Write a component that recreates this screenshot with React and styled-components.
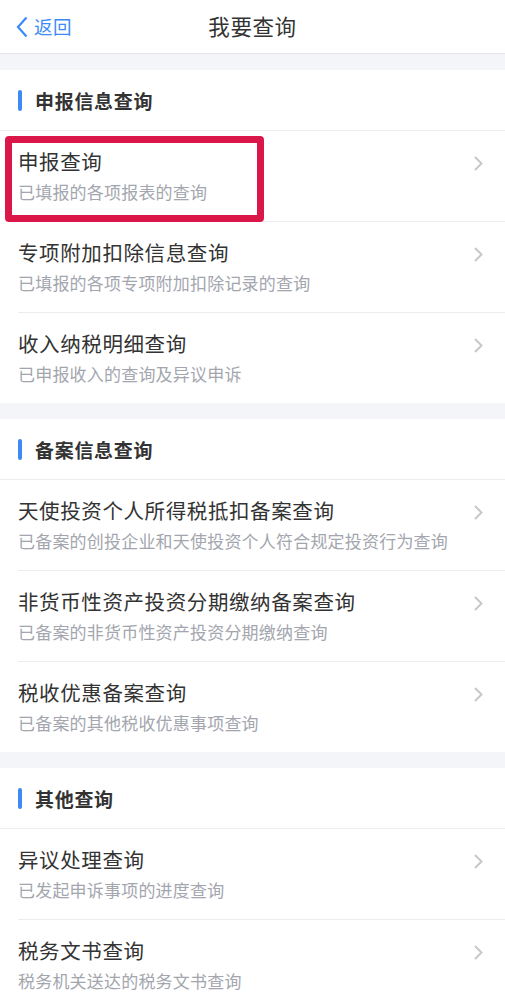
import React from "react";
import styled, { createGlobalStyle } from "styled-components";

const GlobalStyle = createGlobalStyle`
  body {
    margin: 0;
    background: #f4f5f8;
    font-family: "Noto Sans CJK SC", "Noto Sans", sans-serif;
  }
`;

const sections = [
  {
    title: "申报信息查询",
    items: [
      { name: "申报查询", desc: "已填报的各项报表的查询", marked: true },
      { name: "专项附加扣除信息查询", desc: "已填报的各项专项附加扣除记录的查询" },
      { name: "收入纳税明细查询", desc: "已申报收入的查询及异议申诉" },
    ],
  },
  {
    title: "备案信息查询",
    items: [
      {
        name: "天使投资个人所得税抵扣备案查询",
        desc: "已备案的创投企业和天使投资个人符合规定投资行为查询",
      },
      {
        name: "非货币性资产投资分期缴纳备案查询",
        desc: "已备案的非货币性资产投资分期缴纳查询",
      },
      { name: "税收优惠备案查询", desc: "已备案的其他税收优惠事项查询" },
    ],
  },
  {
    title: "其他查询",
    items: [
      { name: "异议处理查询", desc: "已发起申诉事项的进度查询" },
      { name: "税务文书查询", desc: "税务机关送达的税务文书查询" },
    ],
  },
];

function Chevron() {
  return (
    <svg width="11" height="17" viewBox="0 0 11 17">
      <polyline
        points="2,2 8.5,8.5 2,15"
        fill="none"
        stroke="#c7c7cc"
        strokeWidth="2"
      />
    </svg>
  );
}

function BackIcon() {
  return (
    <svg width="12" height="22" viewBox="0 0 12 22">
      <polyline
        points="10.5,1.5 2,11 10.5,20.5"
        fill="none"
        stroke="#3d8af7"
        strokeWidth="2.2"
      />
    </svg>
  );
}

export default function App() {
  return (
    <Page>
      <GlobalStyle />
      <NavBar>
        <Back>
          <BackIcon />
          <span>返回</span>
        </Back>
        <NavTitle>我要查询</NavTitle>
      </NavBar>
      {sections.map((section) => (
        <Section key={section.title}>
          <SectionHead>
            <Bar />
            {section.title}
          </SectionHead>
          {section.items.map((item) => (
            <Item key={item.name}>
              <ItemBody>
                <ItemText>
                  <ItemName>{item.name}</ItemName>
                  <ItemDesc>{item.desc}</ItemDesc>
                </ItemText>
                <Arrow>
                  <Chevron />
                </Arrow>
              </ItemBody>
              {item.marked && <Mark />}
            </Item>
          ))}
        </Section>
      ))}
    </Page>
  );
}

const Page = styled.div`
  width: 505px;
  min-height: 996px;
  background: #f4f5f8;
`;

const NavBar = styled.div`
  position: relative;
  height: 53px;
  background: #fff;
  border-bottom: 1px solid #e3e4e8;
  display: flex;
  align-items: center;
  justify-content: center;
`;

const Back = styled.div`
  position: absolute;
  left: 16px;
  top: 0;
  height: 53px;
  display: flex;
  align-items: center;
  gap: 6px;
  color: #3d8af7;
  font-size: 18.5px;
  letter-spacing: 0.5px;
  span {
    margin-top: -1px;
  }
`;

const NavTitle = styled.div`
  font-size: 21.5px;
  color: #333;
  letter-spacing: 0.6px;
  margin-top: -3px;
`;

const Section = styled.div`
  margin-top: 16px;
  background: #fff;
`;

const SectionHead = styled.div`
  height: 60px;
  border-bottom: 1px solid #ebecef;
  display: flex;
  align-items: center;
  padding-left: 18px;
  font-size: 19px;
  font-weight: bold;
  color: #333;
  letter-spacing: 0.7px;
`;

const Bar = styled.span`
  width: 4px;
  height: 21px;
  border-radius: 2px;
  background: #3d8af7;
  margin-right: 13px;
`;

const Item = styled.div`
  position: relative;
  padding-left: 18px;
`;

const ItemBody = styled.div`
  display: flex;
  align-items: flex-start;
  height: 90px;
  border-bottom: 1px solid #ebecef;
  padding-right: 21px;
  ${Item}:last-child & {
    border-bottom: none;
  }
`;

const ItemText = styled.div`
  flex: 1;
  padding-top: 15px;
`;

const ItemName = styled.div`
  font-size: 20.5px;
  line-height: 30px;
  color: #333;
  letter-spacing: 0.6px;
`;

const ItemDesc = styled.div`
  margin-top: 4px;
  font-size: 17px;
  line-height: 24px;
  color: #a3a6ae;
  letter-spacing: 0.2px;
`;

const Arrow = styled.div`
  padding-top: 22px;
`;

const Mark = styled.div`
  position: absolute;
  left: 5px;
  top: 5px;
  width: 259px;
  height: 86px;
  box-sizing: border-box;
  border: 7px solid #db1648;
  border-radius: 4px;
`;
